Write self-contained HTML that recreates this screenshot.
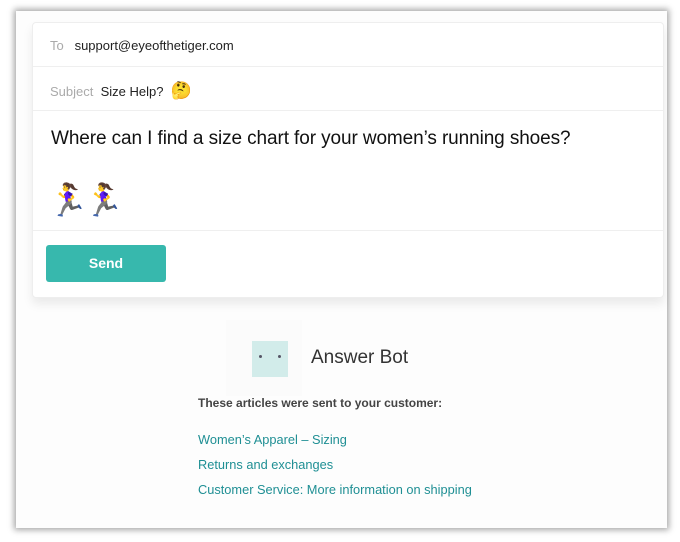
<!DOCTYPE html>
<html><head><meta charset="utf-8"><style>
*{margin:0;padding:0;box-sizing:border-box}
body{width:680px;height:542px;background:#fff;font-family:"Liberation Sans","Noto Sans CJK JP",sans-serif;position:relative;overflow:hidden}
.win{position:absolute;left:16px;top:11px;width:651px;height:517px;background:#fdfdfd;box-shadow:0 0 6px 2px rgba(0,0,0,.35)}
.card{position:absolute;left:32px;top:22px;width:632px;height:276px;background:#fff;border:1px solid #eee;border-radius:4px;box-shadow:0 6px 10px rgba(0,0,0,.08)}
.line{position:absolute;left:0;right:0;height:1px;background:#efefef}
.t{position:absolute;font-size:13px;color:#222;white-space:nowrap}
.g{color:#aaa}
.btn{position:absolute;left:13px;top:222px;width:120px;height:37px;background:#37b8ad;border-radius:3px;color:#fff;font-weight:bold;font-size:14px;text-align:center;line-height:37px}
.a{position:absolute;font-size:12.8px;color:#1f8f94;left:198px;white-space:nowrap}
</style></head><body>
<div class="win"></div>
<div class="card">
<div class="t" style="left:17px;top:15px"><span class="g">To</span>&nbsp;&nbsp;&nbsp;support@eyeofthetiger.com</div>
<div class="line" style="top:43px"></div>
<div class="t" style="left:17px;top:58px"><span class="g">Subject</span>&nbsp;&nbsp;Size Help?&nbsp;&nbsp;<span style="font-size:17px">🤔</span></div>
<div class="line" style="top:87px"></div>
<div class="t" style="left:18px;top:105px;font-size:19px;letter-spacing:-0.1px;color:#111">Where can I find a size chart for your women’s running shoes?</div>
<div class="t" style="left:15px;top:158px;font-size:32px;letter-spacing:-4px">🏃‍♀️🏃‍♀️</div>
<div class="line" style="top:207px"></div>
<div class="btn">Send</div>
</div>
<div style="position:absolute;left:226px;top:320px;width:76px;height:76px;background:#fbfbfb"></div>
<div style="position:absolute;left:252px;top:341px;width:36px;height:36px;background:#d2ecea"></div>
<div style="position:absolute;left:259px;top:355px;width:3px;height:3px;border-radius:50%;background:#556"></div>
<div style="position:absolute;left:278px;top:355px;width:3px;height:3px;border-radius:50%;background:#556"></div>
<div class="t" style="left:311px;top:347px;font-size:19px;color:#333">Answer Bot</div>
<div class="t" style="left:198px;top:396px;font-weight:bold;font-size:12px;color:#444">These articles were sent to your customer:</div>
<div class="a" style="top:432px">Women’s Apparel – Sizing</div>
<div class="a" style="top:457px">Returns and exchanges</div>
<div class="a" style="top:482px">Customer Service: More information on shipping</div>
</body></html>
